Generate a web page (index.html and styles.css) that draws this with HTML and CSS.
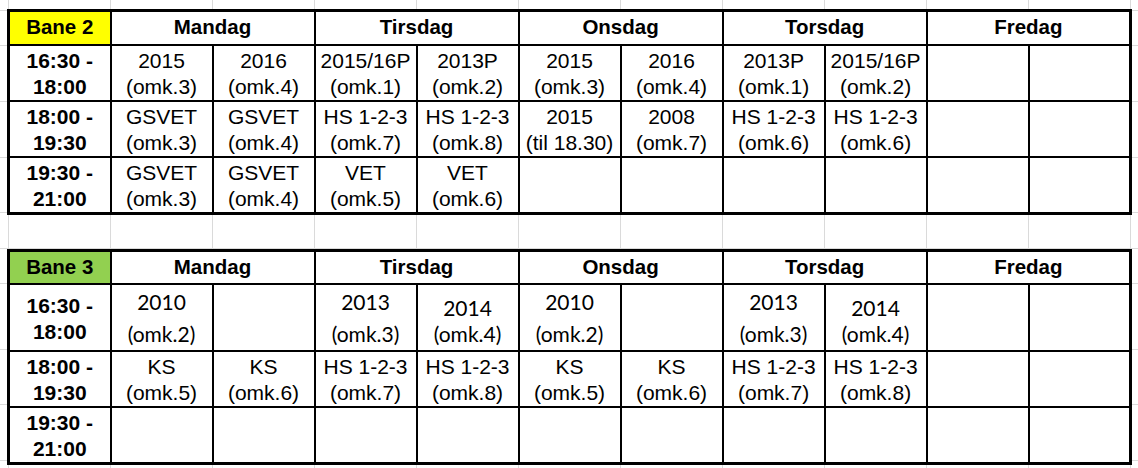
FILE: index.html
```html
<!DOCTYPE html>
<html lang="no">
<head>
<meta charset="utf-8">
<title>Treningstider</title>
<link rel="stylesheet" href="styles.css">
</head>
<body>
<div class="sheet">
  <table class="schedule">
    <colgroup><col span="11" class="col"></colgroup>
    <tr class="head">
      <th class="bane bane-yellow">Bane 2</th>
      <th colspan="2">Mandag</th>
      <th colspan="2">Tirsdag</th>
      <th colspan="2">Onsdag</th>
      <th colspan="2">Torsdag</th>
      <th colspan="2">Fredag</th>
    </tr>
    <tr class="slot">
      <th class="time">16:30 -<br>18:00</th>
      <td>2015<br>(omk.3)</td>
      <td>2016<br>(omk.4)</td>
      <td>2015/16P<br>(omk.1)</td>
      <td>2013P<br>(omk.2)</td>
      <td>2015<br>(omk.3)</td>
      <td>2016<br>(omk.4)</td>
      <td>2013P<br>(omk.1)</td>
      <td>2015/16P<br>(omk.2)</td>
      <td></td>
      <td></td>
    </tr>
    <tr class="slot">
      <th class="time">18:00 -<br>19:30</th>
      <td>GSVET<br>(omk.3)</td>
      <td>GSVET<br>(omk.4)</td>
      <td>HS 1-2-3<br>(omk.7)</td>
      <td>HS 1-2-3<br>(omk.8)</td>
      <td>2015<br>(til 18.30)</td>
      <td>2008<br>(omk.7)</td>
      <td>HS 1-2-3<br>(omk.6)</td>
      <td>HS 1-2-3<br>(omk.6)</td>
      <td></td>
      <td></td>
    </tr>
    <tr class="slot">
      <th class="time">19:30 -<br>21:00</th>
      <td>GSVET<br>(omk.3)</td>
      <td>GSVET<br>(omk.4)</td>
      <td>VET<br>(omk.5)</td>
      <td>VET<br>(omk.6)</td>
      <td></td>
      <td></td>
      <td></td>
      <td></td>
      <td></td>
      <td></td>
    </tr>
  </table>

  <table class="schedule second">
    <colgroup><col span="11" class="col"></colgroup>
    <tr class="head">
      <th class="bane bane-green">Bane 3</th>
      <th colspan="2">Mandag</th>
      <th colspan="2">Tirsdag</th>
      <th colspan="2">Onsdag</th>
      <th colspan="2">Torsdag</th>
      <th colspan="2">Fredag</th>
    </tr>
    <tr class="slot tall">
      <th class="time">16:30 -<br>18:00</th>
      <td class="cal spread"><span class="line">2010</span><span class="line">(omk.2)</span></td>
      <td></td>
      <td class="cal spread"><span class="line">2013</span><span class="line">(omk.3)</span></td>
      <td class="cal tight"><span class="line">2014</span><span class="line">(omk.4)</span></td>
      <td class="cal spread"><span class="line">2010</span><span class="line">(omk.2)</span></td>
      <td></td>
      <td class="cal spread"><span class="line">2013</span><span class="line">(omk.3)</span></td>
      <td class="cal tight"><span class="line">2014</span><span class="line">(omk.4)</span></td>
      <td></td>
      <td></td>
    </tr>
    <tr class="slot mid">
      <th class="time">18:00 -<br>19:30</th>
      <td>KS<br>(omk.5)</td>
      <td>KS<br>(omk.6)</td>
      <td>HS 1-2-3<br>(omk.7)</td>
      <td>HS 1-2-3<br>(omk.8)</td>
      <td>KS<br>(omk.5)</td>
      <td>KS<br>(omk.6)</td>
      <td>HS 1-2-3<br>(omk.7)</td>
      <td>HS 1-2-3<br>(omk.8)</td>
      <td></td>
      <td></td>
    </tr>
    <tr class="slot">
      <th class="time">19:30 -<br>21:00</th>
      <td></td>
      <td></td>
      <td></td>
      <td></td>
      <td></td>
      <td></td>
      <td></td>
      <td></td>
      <td></td>
      <td></td>
    </tr>
  </table>
</div>
</body>
</html>
```

FILE: styles.css
```css
html, body {
  margin: 0;
  padding: 0;
  background: #ffffff;
}

.sheet {
  box-sizing: border-box;
  width: 1138px;
  height: 468px;
  overflow: hidden;
  padding: 9px 0 0 7px;
  background:
    linear-gradient(#dadada, #dadada) 0 10px / 100% 1px no-repeat,
    linear-gradient(#dadada, #dadada) 0 45px / 100% 1px no-repeat,
    linear-gradient(#dadada, #dadada) 0 101px / 100% 1px no-repeat,
    linear-gradient(#dadada, #dadada) 0 157px / 100% 1px no-repeat,
    linear-gradient(#dadada, #dadada) 0 212px / 100% 1px no-repeat,
    linear-gradient(#dadada, #dadada) 0 248px / 100% 1px no-repeat,
    linear-gradient(#dadada, #dadada) 0 283px / 100% 1px no-repeat,
    linear-gradient(#dadada, #dadada) 0 349px / 100% 1px no-repeat,
    linear-gradient(#dadada, #dadada) 0 404px / 100% 1px no-repeat,
    linear-gradient(#dadada, #dadada) 0 460px / 100% 1px no-repeat,
    linear-gradient(to right, #dadada 1px, transparent 1px) 8px 0 / 102px 100% repeat-x,
    #ffffff;
  font-family: "Liberation Sans", Arial, sans-serif;
  color: #000000;
}

.schedule {
  border-collapse: collapse;
  table-layout: fixed;
  width: 1125px;
  border: 3px solid #000000;
  background: #ffffff;
}

.schedule.second {
  margin-top: 34px;
}

.col {
  width: 102px;
}

.schedule th,
.schedule td {
  border: 2px solid #000000;
  padding: 2px 0 0 0;
  text-align: center;
  vertical-align: middle;
  font-size: 21px;
  line-height: 26px;
  white-space: nowrap;
  overflow: hidden;
}

.schedule th {
  font-weight: bold;
}

.head {
  height: 34px;
}

.head th {
  font-size: 20.5px;
  line-height: 24px;
  padding: 0 0 1px 0;
}

.slot {
  height: 56px;
}

.slot.tall {
  height: 66px;
}

.slot.mid {
  height: 55px;
}

.bane-yellow {
  background: #ffff00;
}

.bane-green {
  background: #92d050;
}

.cal {
  font-family: Lato, "Liberation Sans", sans-serif;
  font-size: 21px;
  vertical-align: top;
}

.cal .line {
  display: block;
}

.cal.spread {
  padding-top: 1px;
  line-height: 32px;
}

.cal.tight {
  padding-top: 6px;
  line-height: 26px;
}
```
